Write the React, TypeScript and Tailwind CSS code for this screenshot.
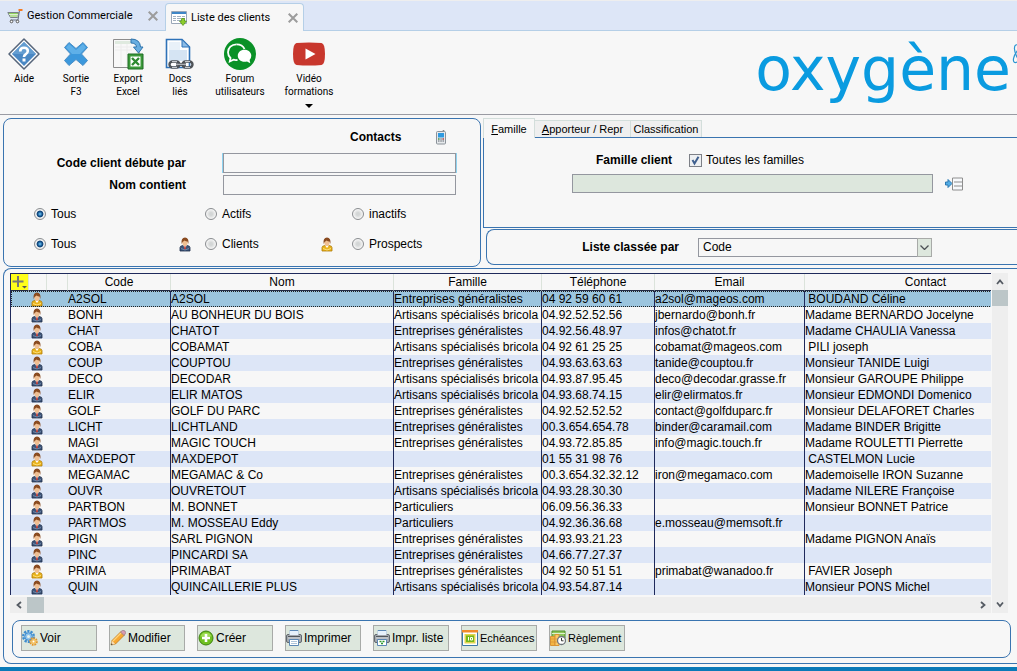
import React from 'react';

type ContactKind = 'client' | 'prospect';

interface Client {
  code: string;
  nom: string;
  famille: string;
  telephone: string;
  email: string;
  contact: string;
  kind: ContactKind;
}

const GEN = 'Entreprises généralistes';
const ART = 'Artisans spécialisés bricola';
const PART = 'Particuliers';

const row = (
  code: string,
  nom: string,
  famille: string,
  telephone: string,
  email: string,
  contact: string,
  kind: ContactKind = 'client'
): Client => ({ code, nom, famille, telephone, email, contact, kind });

const CLIENTS: Client[] = [
  row('A2SOL', 'A2SOL', GEN, '04 92 59 60 61', 'a2sol@mageos.com', ' BOUDAND Céline', 'prospect'),
  row('BONH', 'AU BONHEUR DU BOIS', ART, '04.92.52.52.56', 'jbernardo@bonh.fr', 'Madame BERNARDO Jocelyne'),
  row('CHAT', 'CHATOT', GEN, '04.92.56.48.97', 'infos@chatot.fr', 'Madame CHAULIA Vanessa'),
  row('COBA', 'COBAMAT', ART, '04 92 61 25 25', 'cobamat@mageos.com', ' PILI joseph', 'prospect'),
  row('COUP', 'COUPTOU', GEN, '04.93.63.63.63', 'tanide@couptou.fr', 'Monsieur TANIDE Luigi'),
  row('DECO', 'DECODAR', ART, '04.93.87.95.45', 'deco@decodar.grasse.fr', 'Monsieur GAROUPE Philippe'),
  row('ELIR', 'ELIR MATOS', ART, '04.93.68.74.15', 'elir@elirmatos.fr', 'Monsieur EDMONDI Domenico'),
  row('GOLF', 'GOLF DU PARC', GEN, '04.92.52.52.52', 'contact@golfduparc.fr', 'Monsieur DELAFORET Charles'),
  row('LICHT', 'LICHTLAND', GEN, '00.3.654.654.78', 'binder@caramail.com', 'Madame BINDER Brigitte'),
  row('MAGI', 'MAGIC TOUCH', GEN, '04.93.72.85.85', 'info@magic.touch.fr', 'Madame ROULETTI Pierrette'),
  row('MAXDEPOT', 'MAXDEPOT', '', '01 55 31 98 76', '', ' CASTELMON Lucie', 'prospect'),
  row('MEGAMAC', 'MEGAMAC & Co', GEN, '00.3.654.32.32.12', 'iron@megamaco.com', 'Mademoiselle IRON Suzanne'),
  row('OUVR', 'OUVRETOUT', ART, '04.93.28.30.30', '', 'Madame NILERE Françoise'),
  row('PARTBON', 'M. BONNET', PART, '06.09.56.36.33', '', 'Monsieur BONNET Patrice'),
  row('PARTMOS', 'M. MOSSEAU Eddy', PART, '04.92.36.36.68', 'e.mosseau@memsoft.fr', ''),
  row('PIGN', 'SARL PIGNON', GEN, '04.93.93.21.23', '', 'Madame PIGNON Anaïs'),
  row('PINC', 'PINCARDI SA', GEN, '04.66.77.27.37', '', ''),
  row('PRIMA', 'PRIMABAT', GEN, '04 92 50 51 51', 'primabat@wanadoo.fr', ' FAVIER Joseph', 'prospect'),
  row('QUIN', 'QUINCAILLERIE PLUS', ART, '04.93.54.87.14', '', 'Monsieur PONS Michel'),
];

/* ---------- Icons ---------- */

const PersonIcon = ({ kind }: { kind: ContactKind }) => {
  const body = kind === 'client' ? '#3d5578' : '#e9b31c';
  const edge = kind === 'client' ? '#1e2f4c' : '#b07c08';
  return (
    <svg className="block h-[15px] w-3 shrink-0" viewBox="0 0 12 15" aria-hidden="true">
      <path d="M1 14V10.500Q1 8.800 4 8.500H8Q11 8.800 11 10.500V14Z" fill={body} stroke={edge} strokeWidth=".8" />
      <path d="M4 8.300L6 11 8 8.300Z" fill="#fff" />
      {kind === 'client' && <path d="M5.500 9H6.500L6.900 12.500H5.100Z" fill="#d33b2c" />}
      <path
        d="M2 11.500Q6 14.500 10 11.500"
        fill="none"
        stroke={kind === 'client' ? '#6f86a8' : '#ffe07a'}
      />
      <ellipse cx="6" cy="5.300" rx="2.700" ry="3.700" fill="#f0bf92" />
      <path d="M2.600 7Q1.800.5 6 .5T9.400 7L8.500 4.500Q6.800 4.500 5.500 3.500L3.600 5Z" fill="#8a4b20" />
    </svg>
  );
};

const CartIcon = () => (
  <svg className="h-4 w-4 shrink-0" viewBox="0 0 16 16" aria-hidden="true">
    <path d="M.8 4.500H11.500L10.500 9.500H3.500Z" fill="#8fd05f" stroke="#7b8188" />
    <path d="M2 6.500H11M3 8H11" stroke="#f2f8ee" strokeWidth=".8" />
    <path d="M12.500 2.500L11 12H3.500" fill="none" stroke="#6b7280" />
    <path d="M11.500 2H15.500" stroke="#f47a1f" strokeWidth="2" />
    <circle cx="4.500" cy="13.500" r="1.300" fill="#fff" stroke="#555" />
    <circle cx="10.500" cy="13.500" r="1.300" fill="#fff" stroke="#555" />
  </svg>
);

const ListIcon = () => (
  <svg className="h-4 w-4 shrink-0" viewBox="0 0 16 16" aria-hidden="true">
    <path d="M.5 1.500H15.500V13.500H.5Z" fill="#fff" stroke="#9aa7b8" />
    <path d="M1 2H15V4H1Z" fill="#3e86c6" />
    <path d="M2 6.500H14M2 8.500H14M2 10.500H14" stroke="#a3b1c0" />
    <path d="M5.500 4V13M10.500 4V13" stroke="#fff" />
    <path d="M10.500 8.500H13.500V11H15.500L12 15.500 8.500 11H10.500Z" fill="#8dcc2b" stroke="#4c9113" strokeWidth=".7" />
  </svg>
);

const CloseIcon = () => (
  <svg className="h-[10px] w-[10px]" viewBox="0 0 10 10" aria-hidden="true">
    <path d="M.7 .7L9.300 9.300M9.300 .7L.7 9.300" stroke="#9c9c9c" strokeWidth="2" />
  </svg>
);

const HelpIcon = () => (
  <svg className="h-8 w-8" viewBox="0 0 32 32" aria-hidden="true">
    <path d="M16 1L31 16 16 31 1 16Z" fill="#fff" stroke="#56657a" strokeWidth="1.500" strokeLinejoin="round" />
    <path d="M16 4L28 16 16 28 4 16Z" fill="#4a88c4" />
    <path d="M16 4L28 16H4Z" fill="#639dd1" />
    <path d="M12.200 13.500Q12.200 9.800 16 9.800T19.800 13Q19.800 15 17.600 16.300 16 17.200 16 19" fill="none" stroke="#fff" strokeWidth="2.600" />
    <path d="M14.500 20.500H17.500V23.500H14.500Z" fill="#fff" />
  </svg>
);

const ExitIcon = () => (
  <svg className="h-8 w-8" viewBox="0 0 32 32" aria-hidden="true">
    <path d="M9 4.500L16 10.500 23 4.500 27.500 9.500 21.500 16 27.500 22.500 23 27.500 16 21.500 9 27.500 4.500 22.500 10.500 16 4.500 9.500Z" fill="#3c98dc" stroke="#4b8fc6" strokeLinejoin="round" />
    <path d="M9 6L16 12 23 6 26 9.500 20 16H12L6 9.500Z" fill="#5fb0e8" />
  </svg>
);

const ExportIcon = () => (
  <svg className="h-8 w-8" viewBox="0 0 32 32" aria-hidden="true">
    <path d="M1.500 1.500H22L27 7V29.500H1.500Z" fill="#f8f8f8" stroke="#8c8c8c" />
    <path d="M3 3H19V6H3Z" fill="#dfeadf" />
    <path d="M3 9H20M3 12H20M9 6V28M15 6V28" stroke="#ececec" />
    <path d="M19 1Q28 1 28.500 9H31L26.500 15 21.500 9H24.500Q24 5 19 5Z" fill="#69aee0" stroke="#2f74ad" />
    <path d="M16 16H31V31H16Z" fill="#3c9a3a" stroke="#1f6d25" />
    <path d="M18.500 18.500H28.500V28.500H18.500Z" fill="#fff" />
    <path d="M20 20L27 27M27 20L20 27" stroke="#2e8931" strokeWidth="2.400" />
  </svg>
);

const DocsIcon = () => (
  <svg className="h-8 w-8" viewBox="0 0 32 32" aria-hidden="true">
    <path d="M2.500 1.500H18L25.500 9V29.500H2.500Z" fill="#fff" stroke="#2e72b8" strokeWidth="1.600" />
    <path d="M5 12H23V23H5Z" fill="#d5e4f3" />
    <path d="M5 4H16V12H5Z" fill="#e9f1f9" />
    <path d="M18 1.500V9H25.500Z" fill="#8dbce6" stroke="#2e72b8" />
    <rect x="5.500" y="23.500" width="10" height="6" rx="3" fill="none" stroke="#4f5358" strokeWidth="2.400" />
    <rect x="18.500" y="23.500" width="10" height="6" rx="3" fill="none" stroke="#4f5358" strokeWidth="2.400" />
    <path d="M12 26.500H22" stroke="#4f5358" strokeWidth="2.800" />
    <path d="M12 26.300H22M8 23.500H13M21 23.500H26M8 29.500H13M21 29.500H26" stroke="#c5c8cc" />
  </svg>
);

const ForumIcon = () => (
  <svg className="h-8 w-8" viewBox="0 0 32 32" aria-hidden="true">
    <circle cx="16" cy="16" r="16" fill="#0a9127" />
    <path d="M12.500 6.300C7.500 6.300 4 9.800 4 14.200 4 16.600 5 18.600 6.500 20L5.800 23.500 9.500 21.700Q11 22.300 13.500 22" fill="none" stroke="#fff" strokeWidth="1.800" />
    <path d="M12.500 6.300Q18.500 6.300 20.500 11" fill="none" stroke="#fff" strokeWidth="1.800" />
    <path d="M20.500 11.800C16.500 11.800 13.800 14.500 13.800 17.800S16.500 23.800 20.500 23.800Q21.800 23.800 23 23.400L26.300 25.200 25.600 22Q27.300 20.300 27.300 17.800C27.300 14.500 24.500 11.800 20.500 11.800Z" fill="#fff" />
  </svg>
);

const VideoIcon = () => (
  <svg className="h-8 w-8" viewBox="0 0 32 32" aria-hidden="true">
    <path d="M3.500 5Q16 4 28.500 5 32 5.500 32 16T28.500 27Q16 28 3.500 27 0 26.500 0 16T3.500 5Z" fill="#c8372d" />
    <path d="M12.500 10.500V21.500L22.500 16Z" fill="#fff" />
  </svg>
);

const AtomIcon = () => (
  <svg className="h-5 w-6" viewBox="0 0 24 20" aria-hidden="true">
    <g fill="none" stroke="#2a94d2" strokeWidth="1.200">
      <ellipse cx="9" cy="10" rx="4" ry="10" transform="rotate(35 9 10)" />
      <ellipse cx="9" cy="10" rx="4" ry="10" transform="rotate(-25 9 10)" />
    </g>
    <circle cx="9" cy="10" r="3" fill="#f2ba4c" />
  </svg>
);

const PhoneIcon = () => (
  <svg className="h-4 w-3" viewBox="0 0 12 16" aria-hidden="true">
    <path d="M8.500 1V3" stroke="#888" strokeWidth="1.600" />
    <rect x="1.500" y="2.500" width="9" height="12.500" rx="1" fill="#e6e9ec" stroke="#8b9299" />
    <path d="M3 4H9V8.500H3Z" fill="#2f9ae0" />
    <path d="M3 10H4.500M5.300 10H6.800M7.500 10H9M3 12H4.500M5.300 12H6.800M7.500 12H9" stroke="#596068" strokeWidth="1.200" />
    <path d="M3 10H4.500" stroke="#3aa83a" strokeWidth="1.200" />
    <path d="M7.500 10H9" stroke="#d33" strokeWidth="1.200" />
  </svg>
);

const PickListIcon = () => (
  <svg className="block h-[14px] w-[18px]" viewBox="0 0 18 14" aria-hidden="true">
    <path d="M.5 5H3V2.500L7 6.500 3 10.500V8H.5Z" fill="#54aee6" stroke="#2a78b2" />
    <path d="M7.500 1H17.500V13H7.500Z" fill="#f8fafc" stroke="#8e8e8e" />
    <path d="M9 5H17M9 9H17" stroke="#8e8e8e" />
  </svg>
);

const GearsIcon = () => (
  <svg className="h-4 w-4 shrink-0" viewBox="0 0 16 16" aria-hidden="true">
    <circle cx="6.500" cy="6.500" r="5.300" fill="none" stroke="#3d8ccf" strokeWidth="2.400" strokeDasharray="2.200 1.100" />
    <circle cx="6.500" cy="6.500" r="3.800" fill="#8fc4ee" stroke="#3d8ccf" />
    <circle cx="6.500" cy="6.500" r="1.500" fill="#e8f2ea" />
    <circle cx="11.500" cy="11.500" r="3.300" fill="none" stroke="#e2962a" strokeWidth="2" strokeDasharray="1.700 .8" />
    <circle cx="11.500" cy="11.500" r="2.500" fill="#f6c15c" />
    <circle cx="11.500" cy="11.500" r="1" fill="#fff" />
  </svg>
);

const PencilIcon = () => (
  <svg className="h-4 w-4 shrink-0" viewBox="0 0 16 16" aria-hidden="true">
    <path d="M1 15L2 10.500 11 1.500 14.500 5 5.500 14Z" fill="#f7a832" stroke="#b8701a" strokeWidth=".7" />
    <path d="M3 11L11.500 2.500" stroke="#ffd47a" strokeWidth="1.300" />
    <path d="M10.500 2L12.300.5Q14 0 15.200 1.300 16 2.500 15.300 3.800L14 5.500Z" fill="#d99aae" stroke="#8f7a85" strokeWidth=".7" />
    <path d="M1 15L2 10.800 5.200 14Z" fill="#f6ddb5" />
    <path d="M1 15L1.400 13.200 2.800 14.600Z" fill="#333" />
  </svg>
);

const AddIcon = () => (
  <svg className="h-4 w-4 shrink-0" viewBox="0 0 16 16" aria-hidden="true">
    <circle cx="8" cy="8" r="7" fill="#6fc020" stroke="#3d8110" />
    <path d="M2.500 6.500Q3.500 2.500 8 2.500T13.500 6.500Z" fill="#9edb55" />
    <path d="M8 4V12M4 8H12" stroke="#fff" strokeWidth="2.600" />
  </svg>
);

const PrinterIcon = ({ list = false }: { list?: boolean }) => (
  <svg className="h-4 w-4 shrink-0" viewBox="0 0 16 16" aria-hidden="true">
    <path d="M4 .5H12V6H4Z" fill="#e7f1fb" stroke="#5b87b5" />
    <rect x=".5" y="4.500" width="15" height="8" rx="1.500" fill="#a4a9b0" stroke="#62686f" />
    <path d="M3.500 1H12.500V5H3.500Z" fill="#e7f1fb" />
    <path d="M2 6.500H14" stroke="#53585e" />
    <path d="M2 8H14" stroke="#d5d9dd" />
    <path d="M3.500 9.500H12.500V15.500H3.500Z" fill="#fff" stroke="#5b87b5" />
    {list ? (
      <path d="M5.500 11.500H7.500M8.500 11.500H10.500M7 13.500H9" stroke="#2c9a2c" strokeWidth="1.300" />
    ) : (
      <path d="M5 11.500H11M5 13.500H11" stroke="#aec4da" />
    )}
  </svg>
);

const ScheduleIcon = () => (
  <svg className="h-4 w-4 shrink-0" viewBox="0 0 16 16" aria-hidden="true">
    <path d="M.5 .5H15.500V15.500H.5Z" fill="#fff" stroke="#3c78a8" />
    <path d="M0 0H16V2.500H0Z" fill="#f08a2c" />
    <path d="M2.500 4H13.500V13.500H2.500Z" fill="#e3d44e" />
    <path d="M4 5.500H12V12H4Z" fill="#74b81b" />
    <path d="M6.500 7V10.500M8.500 7.500H10.500V10H8.500Z" fill="none" stroke="#fff" />
  </svg>
);

const PaymentIcon = () => (
  <svg className="h-4 w-4 shrink-0" viewBox="0 0 16 16" aria-hidden="true">
    <path d="M2 1H15V8H2Z" fill="#8fc95c" stroke="#4f8b2c" />
    <path d="M2 3.500H15" stroke="#dff0cd" />
    <path d="M.5 6.500H5V15.500H.5Z" fill="#f3b643" stroke="#d99434" />
    <path d="M5 4.500H9V15.500H5Z" fill="#f7c968" stroke="#d99434" />
    <path d="M.5 9H9M.5 12H9" stroke="#d99434" strokeWidth=".7" />
    <circle cx="11.500" cy="10.500" r="4" fill="#fff" stroke="#70767c" strokeWidth="1.300" />
    <path d="M11.500 8V10.800H13.500" fill="none" stroke="#333" />
  </svg>
);

const Chevron = ({ d }: { d: string }) => (
  <svg className="h-2 w-2" viewBox="0 0 8 8" aria-hidden="true">
    <path d={d} fill="none" stroke="#555b63" strokeWidth="1.800" />
  </svg>
);

/* ---------- Controls ---------- */

const RadioOption = ({ name, label, checked = false }: { name: string; label: string; checked?: boolean }) => (
  <label className="flex items-center gap-[5px]">
    <input
      type="radio"
      name={name}
      defaultChecked={checked}
      className="h-3 w-3 appearance-none rounded-full border border-[#8a8d90] bg-[radial-gradient(circle,#d3d6d6_20%,#f4f4f4_65%)] checked:bg-[radial-gradient(circle_at_50%_50%,#5fb8ee_6%,#124a80_34%,#124a80_42%,#f0f0f0_54%)]"
    />
    {label}
  </label>
);

interface ToolButtonProps {
  icon: React.ReactNode;
  lines: string[];
  width: string;
  menu?: boolean;
}

const ToolButton = ({ icon, lines, width, menu = false }: ToolButtonProps) => (
  <button className={`flex flex-col items-center ${width}`}>
    {icon}
    <span className="mt-0.5 flex flex-col leading-[13px]">
      {lines.map((line) => (
        <span key={line}>{line}</span>
      ))}
    </span>
    {menu && (
      <svg className="mt-1.5 h-1 w-2" viewBox="0 0 8 4" aria-hidden="true">
        <path d="M0 0H8L4 4Z" fill="#000" />
      </svg>
    )}
  </button>
);

const ActionButton = ({ icon, label, small = false }: { icon: React.ReactNode; label: string; small?: boolean }) => (
  <button
    className={`flex h-[26px] w-[76px] items-center gap-0.5 whitespace-nowrap border border-[#a8aaa8] bg-[#dde7dd] ${
      small ? 'text-[11px]' : ''
    }`}
  >
    {icon}
    {label}
  </button>
);

/* ---------- Sections ---------- */

const WindowTabs = () => (
  <div className="flex h-[31px] items-end border-t border-b border-t-[#eeeeee] border-b-[#b5cfe7] bg-[#dde6f7] font-['Roboto','Liberation_Sans',sans-serif] text-[11px]">
    <div className="flex h-[29px] w-[165px] items-center gap-1 px-[7px]">
      <CartIcon />
      <span className="flex-1">Gestion Commerciale</span>
      <button aria-label="Fermer Gestion Commerciale">
        <CloseIcon />
      </button>
    </div>
    <div className="-mb-px flex h-7 w-[139px] items-center gap-1 rounded-t border border-b-0 border-[#b5cfe7] bg-[#f7f7f7] px-[5px]">
      <ListIcon />
      <span className="flex-1">Liste des clients</span>
      <button aria-label="Fermer Liste des clients">
        <CloseIcon />
      </button>
    </div>
  </div>
);

const Toolbar = () => (
  <div className="flex h-[84px] items-start overflow-hidden border-b border-[#9a9ba3] pt-[7px] font-['Roboto','Liberation_Sans',sans-serif] text-[10px]">
    <ToolButton icon={<HelpIcon />} lines={['Aide']} width="w-12" />
    <ToolButton icon={<ExitIcon />} lines={['Sortie', 'F3']} width="w-14" />
    <ToolButton icon={<ExportIcon />} lines={['Export', 'Excel']} width="w-12" />
    <ToolButton icon={<DocsIcon />} lines={['Docs', 'liés']} width="w-14" />
    <ToolButton icon={<ForumIcon />} lines={['Forum', 'utilisateurs']} width="w-16" />
    <ToolButton icon={<VideoIcon />} lines={['Vidéo', 'formations']} width="w-[74px]" menu />
    <div className="-mr-[18px] ml-auto flex items-start">
      <span className="font-['DejaVu_Sans',sans-serif] text-[60px] leading-[62px] text-[#0a9be0]">oxygène</span>
      <span className="mt-1.5">
        <AtomIcon />
      </span>
    </div>
  </div>
);

const SearchPanel = () => (
  <section className="w-[478px] shrink-0 rounded-lg border border-[#3a74b0] pt-[9px] pb-3.5 pl-[30px]">
    <div className="ml-[316px] flex h-[18px] items-center gap-[34px]">
      <span className="font-bold">Contacts</span>
      <button aria-label="Contacts">
        <PhoneIcon />
      </button>
    </div>
    <div className="mt-[7px] grid grid-cols-[152px_233px] items-center gap-x-[37px] gap-y-0.5">
      <label htmlFor="code" className="text-right font-bold">
        Code client débute par
      </label>
      <input
        id="code"
        className="h-5 border border-[#94979f] bg-[#f7f7f7] px-1 shadow-[1px_0_#8fd3f0,-1px_0_#8fd3f0] outline-none"
      />
      <label htmlFor="nom" className="text-right font-bold">
        Nom contient
      </label>
      <input id="nom" className="h-5 border border-[#94979f] bg-[#f7f7f7] px-1 outline-none" />
    </div>
    <div className="mt-[11px] grid grid-cols-[145px_26px_116px_31px_100px] items-center gap-y-3.5 leading-4">
      <RadioOption name="etat" label="Tous" checked />
      <span />
      <RadioOption name="etat" label="Actifs" />
      <span />
      <RadioOption name="etat" label="inactifs" />
      <RadioOption name="type" label="Tous" checked />
      <PersonIcon kind="client" />
      <RadioOption name="type" label="Clients" />
      <PersonIcon kind="prospect" />
      <RadioOption name="type" label="Prospects" />
    </div>
  </section>
);

const FamilyPanel = () => (
  <section>
    <div className="flex items-end" role="tablist">
      <button
        role="tab"
        aria-selected="true"
        className="relative -mb-px h-5 w-[52px] border border-b-0 border-[#d3dedb] bg-[#f7f7f7] text-[11px]"
      >
        <u>F</u>amille
      </button>
      <button
        role="tab"
        aria-selected="false"
        className="h-[17px] w-[96px] border border-b-0 border-l-0 border-[#d3dedb] bg-[#efefef] text-[11px]"
      >
        <u>A</u>pporteur / Repr
      </button>
      <button
        role="tab"
        aria-selected="false"
        className="h-[17px] w-[71px] border border-b-0 border-l-0 border-[#d3dedb] bg-[#efefef] text-[11px]"
      >
        Classification
      </button>
    </div>
    <div className="h-[91px] border border-r-0 border-[#3a74b0] pt-[13px] pl-[88px]">
      <div className="flex h-[18px] items-center">
        <span className="w-[100px] text-right font-bold">Famille client</span>
        <label className="ml-[17px] flex items-center gap-1">
          <span className="relative flex">
            <input
              type="checkbox"
              defaultChecked
              className="peer h-[13px] w-[13px] appearance-none border border-[#7d8087] bg-[#eef0f2]"
            />
            <svg
              className="pointer-events-none absolute inset-0 hidden h-[13px] w-[13px] peer-checked:block"
              viewBox="0 0 13 13"
              aria-hidden="true"
            >
              <path d="M3.500 6L5.500 9.500 9.500 2.800" fill="none" stroke="#40608f" strokeWidth="2" />
            </svg>
          </span>
          Toutes les familles
        </label>
      </div>
      <div className="mt-[5px] flex items-center gap-3">
        <input
          aria-label="Famille client"
          disabled
          className="h-[19px] w-[361px] border border-[#94979f] bg-[#dde7dd]"
        />
        <button aria-label="Choisir une famille">
          <PickListIcon />
        </button>
      </div>
    </div>
  </section>
);

const SortPanel = () => (
  <section className="mt-px ml-[3px] flex h-9 items-center rounded-l-lg border border-r-0 border-[#3a74b0] pl-[91px]">
    <label htmlFor="tri" className="w-[101px] text-right font-bold">
      Liste classée par
    </label>
    <div className="relative ml-[19px] h-[19px] w-[234px]">
      <select id="tri" className="block h-full w-full appearance-none border border-[#94979f] bg-[#f7f7f7] pl-1">
        <option>Code</option>
        <option>Nom</option>
        <option>Famille</option>
      </select>
      <span className="pointer-events-none absolute inset-y-0 right-0 flex w-[15px] items-center justify-center border border-[#a8aaa8] bg-[#dde7dd]">
        <svg className="h-[5px] w-[9px]" viewBox="0 0 9 5" aria-hidden="true">
          <path d="M.5 .5L4.500 4.500 8.500 .5" fill="none" stroke="#4b5054" strokeWidth="1.300" />
        </svg>
      </span>
    </div>
  </section>
);

const head = 'h-[17px] border-b border-l border-b-[#222b45] border-l-[#dbe3db] p-0 text-center font-normal';
const cell = 'overflow-hidden border-l border-[#1f2a5c] p-0';

const ClientTable = () => (
  <div className="overflow-hidden border-t border-l border-[#1f2a5c]">
    <table className="w-full min-w-[1035px] table-fixed border-separate border-spacing-0 leading-4 whitespace-pre">
      <colgroup>
        <col className="w-[17px]" />
        <col className="w-[18px]" />
        <col className="w-[21px]" />
        <col className="w-[103px]" />
        <col className="w-[223px]" />
        <col className="w-[148px]" />
        <col className="w-[113px]" />
        <col className="w-[150px]" />
        <col />
      </colgroup>
      <thead>
        <tr>
          <th className="h-[17px] border-b border-[#222b45] bg-[#ffff1a] p-0">
            <button className="block" aria-label="Options de colonnes">
              <svg className="block h-4 w-[17px]" viewBox="0 0 17 16" aria-hidden="true">
                <path d="M7 2V13M1.500 7.500H12.500" stroke="#777" strokeWidth="2" />
                <path d="M11 12H16L13.500 14.500Z" fill="#555" />
              </svg>
            </button>
          </th>
          <th className={head} />
          <th className={head} />
          <th className={head}>Code</th>
          <th className={head}>Nom</th>
          <th className={head}>Famille</th>
          <th className={head}>Téléphone</th>
          <th className={head}>Email</th>
          <th className={head}>Contact</th>
        </tr>
      </thead>
      <tbody>
        {CLIENTS.map((client, index) => (
          <tr
            key={client.code}
            className={
              index === 0
                ? 'bg-[#9cc5de] outline-1 -outline-offset-1 outline-dotted outline-[#222]'
                : 'odd:bg-[#dde6f7] even:bg-[#f7f7f7]'
            }
          >
            <td className="h-4 p-0" />
            <td className="h-4 p-0">
              <div className="flex h-4 items-center justify-center">
                <PersonIcon kind={client.kind} />
              </div>
            </td>
            <td className="h-4 p-0" />
            <td className="h-4 overflow-hidden p-0 pl-px">{client.code}</td>
            <td className={cell}>{client.nom}</td>
            <td className={cell}>{client.famille}</td>
            <td className={cell}>{client.telephone}</td>
            <td className={cell}>{client.email}</td>
            <td className={cell}>{client.contact}</td>
          </tr>
        ))}
      </tbody>
    </table>
  </div>
);

const Footer = () => (
  <div className="mt-[7px] mr-[6px] ml-2 flex gap-3 rounded-lg border border-[#3a74b0] px-2 pt-1 pb-[6px]">
    <ActionButton icon={<GearsIcon />} label="Voir" />
    <ActionButton icon={<PencilIcon />} label="Modifier" />
    <ActionButton icon={<AddIcon />} label="Créer" />
    <ActionButton icon={<PrinterIcon />} label="Imprimer" />
    <ActionButton icon={<PrinterIcon list />} label="Impr. liste" />
    <ActionButton icon={<ScheduleIcon />} label="Echéances" small />
    <ActionButton icon={<PaymentIcon />} label="Règlement" small />
  </div>
);

const App: React.FC = () => (
  <div className="overflow-hidden bg-[#f7f7f7] font-['Liberation_Sans',Arial,sans-serif] text-[12px] leading-4 text-black">
    <WindowTabs />
    <Toolbar />

    <main className="pt-[3px] pl-[3px]">
      <div className="flex items-start gap-0.5">
        <SearchPanel />
        <div className="min-w-0 flex-1">
          <FamilyPanel />
          <SortPanel />
        </div>
      </div>

      <section className="mt-px rounded-l-lg border border-r-0 border-[#3a74b0] pt-1 pb-[5px]">
        <div className="ml-1.5 grid grid-cols-[minmax(0,1fr)_16px] gap-x-px pr-[9px]">
          <ClientTable />
          <div className="flex flex-col items-center bg-[#eeeeee]">
            <span className="flex h-[17px] items-center">
              <Chevron d="M1 6L4 2.500 7 6" />
            </span>
            <span className="h-4 w-full bg-[#bcc6c8]" />
          </div>
          <div className="mt-0.5 flex h-4 items-center bg-[#eeeeee]">
            <span className="flex w-[17px] justify-center">
              <Chevron d="M6 1L2.500 4 6 7" />
            </span>
            <span className="h-full w-[17px] bg-[#bcc6c8]" />
            <span className="ml-auto flex w-[17px] justify-center">
              <Chevron d="M2 1L5.500 4 2 7" />
            </span>
          </div>
          <div className="flex items-center justify-center bg-[#eeeeee]">
            <Chevron d="M1 2.500L4 6 7 2.500" />
          </div>
        </div>
        <Footer />
      </section>
    </main>

    <div className="mt-[3px] h-1 bg-[#0a7ab8]" />
  </div>
);

export default App;
